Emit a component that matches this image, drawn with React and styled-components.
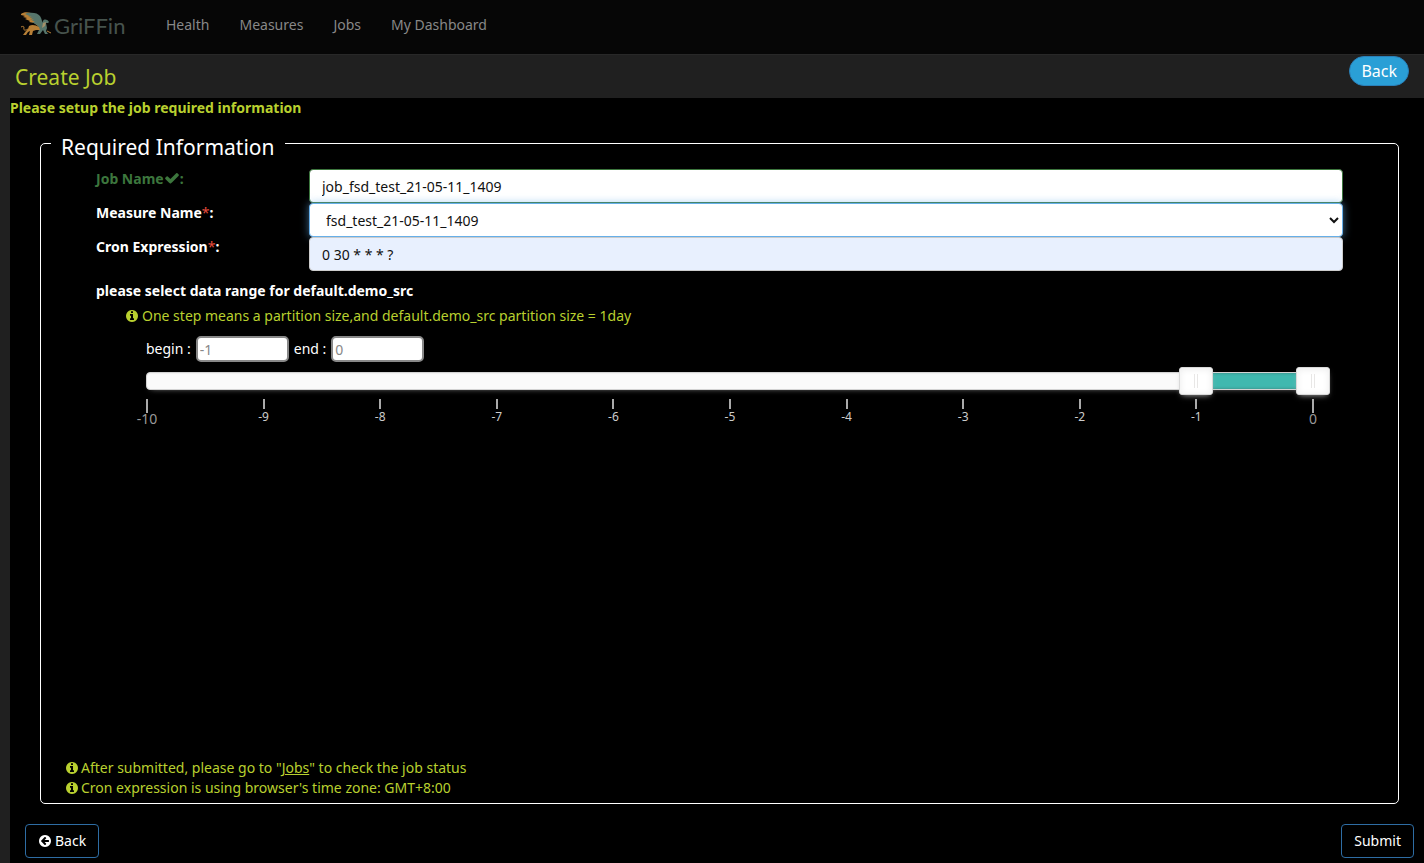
import React, { useState } from 'react'
import styled, { createGlobalStyle } from 'styled-components'

const GlobalStyle = createGlobalStyle`
    * {
        box-sizing: border-box;
    }
    body {
        margin: 0;
        background: #202020;
        color: #fff;
        font-family: "Noto Sans", "Open Sans", sans-serif;
        font-size: 14px;
        line-height: 20px;
    }
    input, select, button {
        font-family: inherit;
        font-size: inherit;
    }
`

const Page = styled.div`
    min-height: 100vh;
    display: flex;
    flex-direction: column;
`

const Navbar = styled.nav`
    height: 55px;
    display: flex;
    align-items: flex-start;
    background: #060606;
    border-bottom: 1px solid #282828;
`

const Brand = styled.a`
    display: block;
    padding: 10px 25px 0 20px;
    svg {
        display: block;
    }
`

const NavLink = styled.a`
    padding: 15px;
    color: #888;
    text-decoration: none;
    &:hover {
        color: #fff;
    }
`

const TitleBar = styled.header`
    height: 43px;
    padding: 0 15px;
    display: flex;
    align-items: flex-start;
    justify-content: space-between;
`

const Title = styled.h1`
    margin: 9px 0 0;
    font-size: 21px;
    line-height: 26px;
    font-weight: 400;
    color: #b9d02f;
`

const PillButton = styled.button`
    height: 30px;
    margin-top: 1px;
    padding: 0 11px;
    border: 1px solid #2a80b9;
    border-radius: 15px;
    background: #2a9fd6;
    color: #fff;
    font-size: 16px;
    cursor: pointer;
`

const Content = styled.form`
    flex: 1;
    display: flex;
    flex-direction: column;
    margin-left: 10px;
    background: #000;
`

const Lead = styled.p`
    margin: 0;
    font-weight: 700;
    color: #b9d02f;
`

const Panel = styled.fieldset`
    flex: 1;
    min-width: 0;
    margin: 10px 25px 0 30px;
    padding: 0 0 5px;
    border: 1px solid #fff;
    border-radius: 5px;
`

const Legend = styled.legend`
    margin-left: 10px;
    padding: 8px 10px 0;
    font-size: 21px;
    line-height: 22px;
`

const Fields = styled.div`
    min-height: calc(100vh - 263px);
    padding: 11px 55px 0;
`

const Field = styled.div`
    display: grid;
    grid-template-columns: 213px 1fr;
    align-items: start;
`

const Label = styled.label`
    font-weight: 700;
    color: ${({ $valid }) => ($valid ? '#3c763d' : '#fff')};
    svg {
        vertical-align: -2px;
    }
`

const Required = styled.span`
    color: #e74c3c;
    font-weight: 400;
`

const Input = styled.input`
    width: 100%;
    height: 34px;
    padding: 0 12px;
    border: 1px solid ${({ $valid }) => ($valid ? '#3c763d' : '#ccc')};
    border-radius: 4px;
    background: ${({ $filled }) => ($filled ? '#e8f0fe' : '#fff')};
    color: #111;
    outline: none;
`

const Select = styled.select`
    width: 100%;
    height: 34px;
    padding: 0 0 0 12px;
    border: 1px solid #66afe9;
    border-radius: 4px;
    background: #fff;
    color: #111;
    outline: none;
    box-shadow: 0 0 8px rgba(102, 175, 233, .6);
`

const RangeTitle = styled.p`
    margin: 10px 0 0;
    font-weight: 700;
`

const Hint = styled.p`
    margin: 0;
    display: flex;
    align-items: center;
    gap: 2px;
    color: #b9d02f;
    a {
        color: inherit;
    }
`

const RangeHint = styled(Hint)`
    margin: 5px 0 0 29px;
    gap: 3px;
`

const RangeBox = styled.div`
    margin: 10px 30px 0 50px;
`

const RangeInputs = styled.div`
    display: flex;
    align-items: center;
    gap: 5px;
`

const SmallInput = styled.input`
    width: 93px;
    height: 26px;
    padding: 0 2px;
    border: 2px solid #888;
    border-radius: 5px;
    background: #fff;
    color: #222;
    &::placeholder {
        color: #888;
    }
`

const Slider = styled.div`
    position: relative;
    height: 18px;
    margin-top: 10px;
    display: flex;
    border: 1px solid #d3d3d3;
    border-radius: 4px;
    background: #fafafa;
    box-shadow: inset 0 1px 1px #f0f0f0, 0 3px 6px -5px #bbb;
`

const Connect = styled.div`
    background: #3fb8af;
    box-shadow: inset 0 0 3px rgba(51, 51, 51, .45);
`

/* both handles share one track, so the inputs lie over it */
const Handle = styled.input`
    position: absolute;
    top: -6px;
    left: -18px;
    width: calc(100% + 36px);
    height: 28px;
    margin: 0;
    appearance: none;
    background: transparent;
    pointer-events: none;
    &::-webkit-slider-thumb {
        appearance: none;
        width: 34px;
        height: 28px;
        border: 1px solid #d9d9d9;
        border-radius: 3px;
        background:
            linear-gradient(#e8e7e6, #e8e7e6) 14px 6px / 1px 14px no-repeat,
            linear-gradient(#e8e7e6, #e8e7e6) 17px 6px / 1px 14px no-repeat,
            #fff;
        box-shadow: inset 0 0 1px #fff, inset 0 1px 7px #ebebeb, 0 3px 6px -3px #bbb;
        pointer-events: auto;
        cursor: pointer;
    }
`

const Pips = styled.div`
    display: flex;
    justify-content: space-between;
    margin-top: 9px;
    padding-left: 1px;
`

const Pip = styled.div`
    width: 0;
    display: flex;
    flex-direction: column;
    align-items: center;
    white-space: nowrap;
    font-size: ${({ $large }) => ($large ? '14px' : '12px')};
    line-height: ${({ $large }) => ($large ? '12px' : '16px')};
    color: ${({ $large }) => ($large ? '#999' : '#ccc')};
    &::before {
        content: "";
        width: 2px;
        height: ${({ $large }) => ($large ? '14px' : '10px')};
        background: #aaa;
    }
`

const Notes = styled.div`
    padding: 0 24px;
`

const Footer = styled.div`
    display: flex;
    justify-content: space-between;
    padding: 20px 10px 5px 15px;
`

const Button = styled.button`
    height: 34px;
    padding: 0 12px;
    display: flex;
    align-items: center;
    gap: 3px;
    border: 1px solid #2e6da4;
    border-radius: 4px;
    background: #000;
    color: #fff;
    line-height: 20px;
    cursor: pointer;
    &:hover {
        background: #286090;
    }
`

const steps = [-10, -9, -8, -7, -6, -5, -4, -3, -2, -1, 0]

const disc = 'M1664 896q0 209-103 385.5t-279.5 279.5-385.5 103-385.5-103-279.5-279.5-103-385.5 103-385.5 279.5-279.5 385.5-103 385.5 103 279.5 279.5 103 385.5z'

const icons = {
    check: 'M1671 566q0 40-28 68l-724 724-136 136q-28 28-68 28t-68-28l-136-136-362-362q-28-28-28-68t28-68l136-136q28-28 68-28t68 28l294 295 656-657q28-28 68-28t68 28l136 136q28 28 28 68z',
    info: `M1152 1376v-160q0-14-9-23t-23-9h-96v-512q0-14-9-23t-23-9h-320q-14 0-23 9t-9 23v160q0 14 9 23t23 9h96v320h-96q-14 0-23 9t-9 23v160q0 14 9 23t23 9h448q14 0 23-9t9-23zM1024 480v-160q0-14-9-23t-23-9h-192q-14 0-23 9t-9 23v160q0 14 9 23t23 9h192q14 0 23-9t9-23z${disc}`,
    back: `M1408 960v-128q0-26-19-45t-45-19h-502l189-189q19-19 19-45t-19-45l-91-91q-18-18-45-18t-45 18l-362 362-91 91q-18 18-18 45t18 45l91 91 362 362q18 18 45 18t45-18l91-91q18-18 18-45t-18-45l-189-189h502q26 0 45-19t19-45z${disc}`
}

const Icon = ({ name, size = 14 }) => (
    <svg width={size} height={size} viewBox="0 0 1792 1792" fill="currentColor" fillRule="evenodd" aria-hidden="true">
        <path d={icons[name]} />
    </svg>
)

const Logo = () => (
    <svg width="106" height="30" viewBox="0 0 106 30" role="img" aria-label="Griffin">
        <path d="M1 4C3 2 8 2 11 3L16 8L20 13L18 16L14 13L9 12L10 11L5 9L7 8L3 7L5 6L1 5Z" fill="#b77f36" />
        <path d="M7 3C13 2 18 3 20 6C22 9 22 12 23 15L21 19L17 15L12 12L15 12L10 9L14 10L8 6L14 8L5 4Z" fill="#56756b" />
        <path d="M21 15L23 11C24 9 27 9 29 12L28 13L26 13L27 18L26 21L28 24H25L23 20L20 24H17L19 20L17 17Z" fill="#56756b" />
        <path d="M9 16C12 14 16 15 19 17L20 20L16 20L13 21L12 25H9L10 21L8 22L6 25H3L6 21L8 19Z" fill="#b77f36" />
        <path d="M23 13L26 12L25 16L22 18Z" fill="#a5916a" />
        <path d="M8 19C5 21 3 20 4 18C4 16 3 16 1 17M27 21L31 23" fill="none" stroke="#b77f36" strokeWidth="1" />
        <text x="34" y="24" fontFamily="Lato, sans-serif" fontSize="22" fill="#46534d">GriFFin</text>
    </svg>
)

const App = () => {
    const [begin, setBegin] = useState(-1)
    const [end, setEnd] = useState(0)

    return (
        <Page>
            <GlobalStyle />
            <Navbar>
                <Brand href="#"><Logo /></Brand>
                <NavLink href="#health">Health</NavLink>
                <NavLink href="#measures">Measures</NavLink>
                <NavLink href="#jobs">Jobs</NavLink>
                <NavLink href="#dashboard">My Dashboard</NavLink>
            </Navbar>
            <TitleBar>
                <Title>Create Job</Title>
                <PillButton type="button">Back</PillButton>
            </TitleBar>
            <Content onSubmit={e => e.preventDefault()}>
                <Lead>Please setup the job required information</Lead>
                <Panel>
                    <Legend>Required Information</Legend>
                    <Fields>
                        <Field>
                            <Label htmlFor="jobName" $valid>Job Name<Icon name="check" size={16} />:</Label>
                            <Input id="jobName" $valid defaultValue="job_fsd_test_21-05-11_1409" />
                        </Field>
                        <Field>
                            <Label htmlFor="measure">Measure Name<Required>*</Required>:</Label>
                            <Select id="measure">
                                <option>fsd_test_21-05-11_1409</option>
                            </Select>
                        </Field>
                        <Field>
                            <Label htmlFor="cron">Cron Expression<Required>*</Required>:</Label>
                            <Input id="cron" $filled defaultValue="0 30 * * * ?" />
                        </Field>
                        <RangeTitle>please select data range for default.demo_src</RangeTitle>
                        <RangeHint><Icon name="info" />One step means a partition size,and default.demo_src partition size = 1day</RangeHint>
                        <RangeBox>
                            <RangeInputs>
                                <label htmlFor="begin">begin :</label>
                                <SmallInput id="begin" placeholder={begin} readOnly />
                                <label htmlFor="end">end :</label>
                                <SmallInput id="end" placeholder={end} readOnly />
                            </RangeInputs>
                            <Slider>
                                <Connect style={{ marginLeft: `${(begin + 10) * 10}%`, width: `${(end - begin) * 10}%` }} />
                                <Handle
                                    type="range"
                                    aria-label="begin"
                                    min={-10}
                                    max={0}
                                    value={begin}
                                    onChange={e => setBegin(Math.min(Number(e.target.value), end))}
                                />
                                <Handle
                                    type="range"
                                    aria-label="end"
                                    min={-10}
                                    max={0}
                                    value={end}
                                    onChange={e => setEnd(Math.max(Number(e.target.value), begin))}
                                />
                            </Slider>
                            <Pips>
                                {steps.map(step => (
                                    <Pip key={step} $large={step % 10 === 0}>{step}</Pip>
                                ))}
                            </Pips>
                        </RangeBox>
                    </Fields>
                    <Notes>
                        <Hint><Icon name="info" /><span>After submitted, please go to "<a href="#jobs">Jobs</a>" to check the job status</span></Hint>
                        <Hint><Icon name="info" />Cron expression is using browser's time zone: GMT+8:00</Hint>
                    </Notes>
                </Panel>
                <Footer>
                    <Button type="button"><Icon name="back" />Back</Button>
                    <Button type="submit">Submit</Button>
                </Footer>
            </Content>
        </Page>
    )
}

export default App
